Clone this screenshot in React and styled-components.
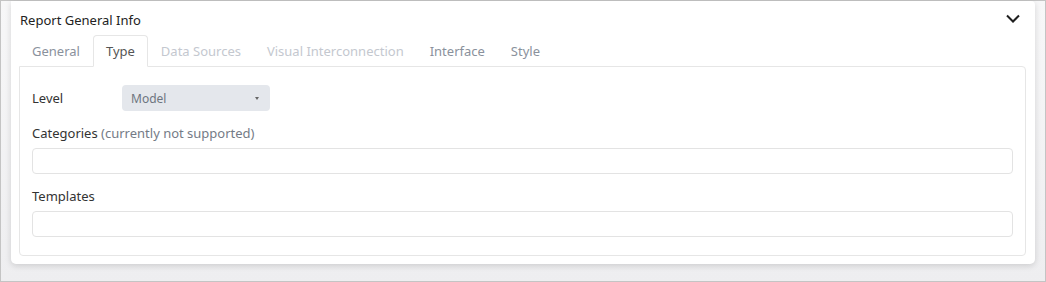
import React from "react";
import styled, { createGlobalStyle } from "styled-components";

const GlobalStyle = createGlobalStyle`
  html, body {
    margin: 0;
    padding: 0;
    background: #f2f2f3;
  }
  * {
    box-sizing: border-box;
  }
`;

const Frame = styled.div`
  width: 1046px;
  height: 282px;
  border: 1px solid #c4c4c4;
  background: linear-gradient(#f7f7f8, #eeeef0);
  padding: 0 10px;
  font-family: "Noto Sans", "Open Sans", sans-serif;
  font-size: 13px;
  color: #333;
`;

const Card = styled.section`
  background: #fff;
  border-radius: 0 4px 5px 5px;
  box-shadow: 0 2px 6px rgba(0, 0, 0, 0.14);
  padding: 0 9px 8px 8px;
`;

const Header = styled.div`
  height: 34px;
  display: flex;
  align-items: center;
  justify-content: space-between;
  padding: 3px 3px 0 1px;
`;

const Title = styled.span`
  font-size: 13px;
  color: #222;
`;

const Chevron = styled.svg`
  width: 16px;
  height: 16px;
  margin-right: 2px;
  margin-top: -4px;
`;

const TabList = styled.div`
  display: flex;
  height: 32px;
  margin-bottom: -1px;
  position: relative;
  z-index: 1;
`;

const Tab = styled.div`
  padding: 0 12px;
  line-height: 30px;
  border: 1px solid ${(p) => (p.$active ? "#e6e6e6" : "transparent")};
  border-bottom-color: ${(p) => (p.$active ? "#fff" : "transparent")};
  border-radius: 4px 4px 0 0;
  background: ${(p) => (p.$active ? "#fff" : "transparent")};
  color: ${(p) => (p.$active ? "#555" : p.$disabled ? "#c4c8cf" : "#8a919c")};
  font-size: 13px;
`;

const Panel = styled.div`
  border: 1px solid #e6e6e6;
  border-radius: 0 4px 4px 4px;
  padding: 18px 12px 18px 12px;
`;

const InlineRow = styled.div`
  display: flex;
  align-items: center;
  height: 26px;
  margin-bottom: 12px;
`;

const LevelLabel = styled.label`
  width: 90px;
  color: #333;
`;

const Select = styled.div`
  width: 148px;
  height: 26px;
  border-radius: 4px;
  background: #e4e7ec;
  color: #6e7580;
  font-size: 12px;
  display: flex;
  align-items: center;
  justify-content: space-between;
  padding: 0 11px 0 9px;
`;

const Caret = styled.span`
  width: 0;
  height: 0;
  border-left: 2.5px solid transparent;
  border-right: 2.5px solid transparent;
  border-top: 3px solid #666;
`;

const Field = styled.div`
  display: flex;
  flex-direction: column;
  gap: 5px;
  & + & {
    margin-top: 12px;
  }
`;

const Label = styled.label`
  line-height: 20px;
  color: #333;
`;

const Hint = styled.span`
  color: #747b86;
`;

const Input = styled.input`
  height: 26px;
  border: 1px solid #e3e3e3;
  border-radius: 4px;
  background: #fff;
  font: inherit;
  padding: 0 8px;
  outline: none;
`;

const tabs = [
  { name: "General" },
  { name: "Type", active: true },
  { name: "Data Sources", disabled: true },
  { name: "Visual Interconnection", disabled: true },
  { name: "Interface" },
  { name: "Style" },
];

export default function App() {
  return (
    <>
      <GlobalStyle />
      <Frame>
        <Card>
          <Header>
            <Title>Report General Info</Title>
            <Chevron viewBox="0 0 16 16" fill="none">
              <path d="M2 5.5l6 6 6-6" stroke="#1f1f1f" strokeWidth="2" />
            </Chevron>
          </Header>
          <TabList>
            {tabs.map((t) => (
              <Tab key={t.name} $active={t.active} $disabled={t.disabled}>
                {t.name}
              </Tab>
            ))}
          </TabList>
          <Panel>
            <InlineRow>
              <LevelLabel>Level</LevelLabel>
              <Select>
                Model
                <Caret />
              </Select>
            </InlineRow>
            <Field>
              <Label>
                Categories <Hint>(currently not supported)</Hint>
              </Label>
              <Input />
            </Field>
            <Field>
              <Label>Templates</Label>
              <Input />
            </Field>
          </Panel>
        </Card>
      </Frame>
    </>
  );
}
